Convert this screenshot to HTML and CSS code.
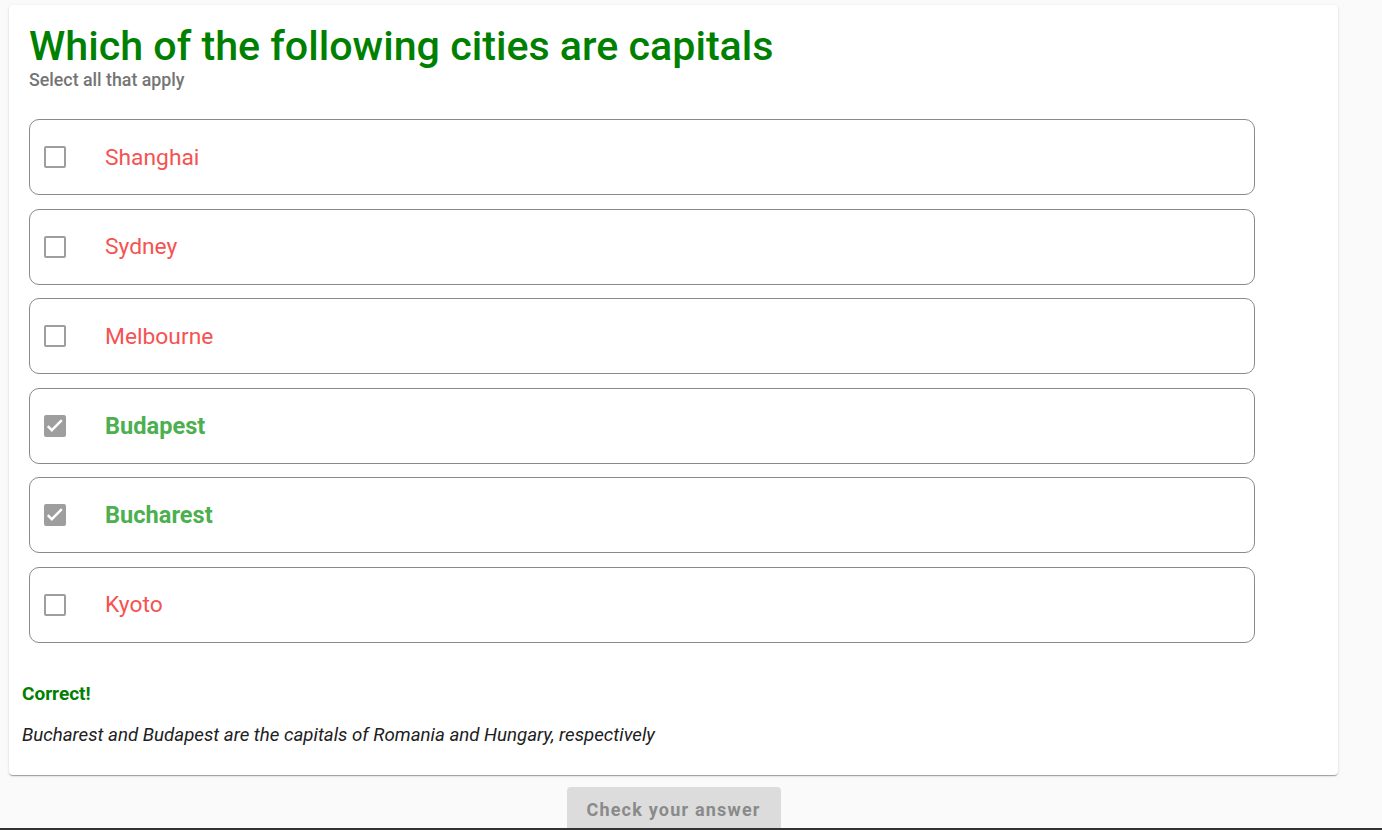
FILE: index.html
```html
<!DOCTYPE html>
<html>
<head>
<meta charset="utf-8">
<link rel="stylesheet" href="styles.css">
</head>
<body>
<div class="page">
  <div class="card">
    <h1 class="title">Which of the following cities are capitals</h1>
    <div class="subtitle">Select all that apply</div>
    <div class="options">
      <div class="option wrong"><span class="box"></span><span class="label">Shanghai</span></div>
      <div class="option wrong"><span class="box"></span><span class="label">Sydney</span></div>
      <div class="option wrong"><span class="box"></span><span class="label">Melbourne</span></div>
      <div class="option right"><span class="box checked"><svg viewBox="0 0 18 18" width="18" height="18"><path d="M1.8 9.2l4 4 10-10" fill="none" stroke="#fff" stroke-width="2.4"/></svg></span><span class="label">Budapest</span></div>
      <div class="option right"><span class="box checked"><svg viewBox="0 0 18 18" width="18" height="18"><path d="M1.8 9.2l4 4 10-10" fill="none" stroke="#fff" stroke-width="2.4"/></svg></span><span class="label">Bucharest</span></div>
      <div class="option wrong"><span class="box"></span><span class="label">Kyoto</span></div>
    </div>
    <div class="feedback">
      <div class="verdict">Correct!</div>
      <div class="explain">Bucharest and Budapest are the capitals of Romania and Hungary, respectively</div>
    </div>
  </div>
  <div class="actions">
    <button class="check">Check your answer</button>
  </div>
</div>
<div class="bottom-edge"></div>
</body>
</html>
```
FILE: styles.css
```css
html, body {
  margin: 0;
  padding: 0;
  background: #fafafa;
  font-family: Roboto, "Liberation Sans", sans-serif;
  overflow: hidden;
  height: 100%;
}
.page {
  width: 1329px;
  padding: 5px 0 0 9px;
}
.card {
  background: #fff;
  border-radius: 4px;
  box-shadow: 0 2px 1px -1px rgba(0,0,0,0.2), 0 1px 1px 0 rgba(0,0,0,0.14), 0 1px 3px 0 rgba(0,0,0,0.12);
  padding: 18px 20px 28px 20px;
  height: 770px;
  box-sizing: border-box;
}
.title {
  margin: 0;
  color: #008000;
  font-size: 41.2px;
  font-weight: 500;
  line-height: 46px;
}
.subtitle {
  color: #757575;
  font-size: 17.8px;
  font-weight: 500;
  line-height: 20px;
  margin-top: 1px;
}
.options {
  margin-top: 29px;
  display: flex;
  flex-direction: column;
  gap: 13.6px;
  width: 1226px;
}
.option {
  height: 76px;
  box-sizing: border-box;
  border: 1px solid #8a8a8a;
  border-radius: 10px;
  display: flex;
  align-items: center;
  padding-left: 14px;
}
.box {
  width: 22px;
  height: 22px;
  box-sizing: border-box;
  border: 2px solid #9e9e9e;
  border-radius: 2px;
  flex: none;
  display: flex;
  align-items: center;
  justify-content: center;
}
.box.checked {
  background: #9e9e9e;
}
.box.checked svg {
  display: block;
  width: 18px;
  height: 18px;
}
.label {
  margin-left: 39px;
  font-size: 22.8px;
}
.wrong .label {
  color: #f55252;
}
.right .label {
  color: #4caf50;
  font-weight: 700;
  font-size: 23.6px;
}
.feedback {
  margin-left: -7px;
  margin-top: 40px;
}
.verdict {
  color: #008000;
  font-weight: 700;
  font-size: 19px;
  line-height: 22px;
}
.explain {
  margin-top: 18px;
  font-style: italic;
  font-size: 18.7px;
  color: #212121;
  line-height: 24px;
}
.actions {
  display: flex;
  justify-content: center;
  padding-top: 12px;
}
.check {
  width: 214px;
  height: 50px;
  border: none;
  border-radius: 4px;
  background: #dcdcdc;
  color: #8a8a8a;
  font-family: Roboto, "Liberation Sans", sans-serif;
  font-weight: 700;
  font-size: 18px;
  letter-spacing: 1.2px;
  padding: 0 0 6px 0;
}
.bottom-edge {
  position: fixed;
  left: 0;
  right: 0;
  bottom: 0;
  height: 2px;
  background: #333;
}
```
